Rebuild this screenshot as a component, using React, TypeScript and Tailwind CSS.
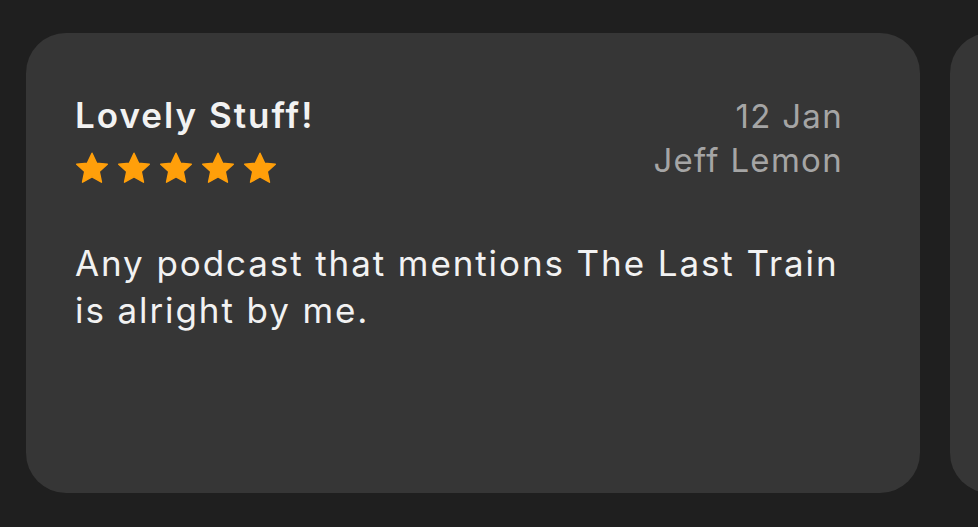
import * as React from "react";

type Review = {
  title: string;
  date: string;
  author: string;
  rating: number;
  body: string;
};

const reviews: Review[] = [
  {
    title: "Lovely Stuff!",
    date: "12 Jan",
    author: "Jeff Lemon",
    rating: 5,
    body: "Any podcast that mentions The Last Train is alright by me.",
  },
  {
    title: "",
    date: "",
    author: "",
    rating: 0,
    body: "",
  },
];

function Star() {
  return (
    <svg width="34" height="32" viewBox="0 0 34 32" aria-hidden="true">
      <path
        d="M17 1.2l4.6 9.9 10.7 1.2-8 7.3 2.2 10.6L17 24.8l-9.5 5.4 2.2-10.6-8-7.3 10.7-1.2z"
        fill="#ff9f0a"
        stroke="#ff9f0a"
        strokeWidth="1.4"
        strokeLinejoin="round"
      />
    </svg>
  );
}

function ReviewCard({ review }: { review: Review }) {
  return (
    <div className="flex h-[460px] w-[894px] shrink-0 flex-col rounded-[40px] bg-[#363636] pl-[49px] pr-[78px] pt-[60px]">
      <div className="flex items-start justify-between">
        <div className="flex flex-col">
          <h2 className="text-[35px] font-semibold leading-[44px] tracking-[2px] text-[#f2f2f2]">
            {review.title}
          </h2>
          {review.rating > 0 && (
            <div className="mt-[15px] flex gap-[8px]">
              {Array.from({ length: review.rating }).map((_, i) => (
                <Star key={i} />
              ))}
            </div>
          )}
        </div>
        <div className="-mr-[1px] flex flex-col items-end pt-[1px] text-[33px] leading-[44px] tracking-[1.3px] text-[#a5a5a5]">
          <span>{review.date}</span>
          <span>{review.author}</span>
        </div>
      </div>
      <p className="mt-[56px] text-[35px] leading-[47px] tracking-[1.9px] text-[#f2f2f2]">{review.body}</p>
    </div>
  );
}

export default function App() {
  return (
    <div
      className="flex h-[527px] w-[978px] gap-[30px] overflow-hidden bg-[#1f1f1f] pl-[26px] pt-[33px]"
      style={{ fontFamily: "Inter, 'Noto Sans', sans-serif" }}
    >
      {reviews.map((r, i) => (
        <ReviewCard key={i} review={r} />
      ))}
    </div>
  );
}
